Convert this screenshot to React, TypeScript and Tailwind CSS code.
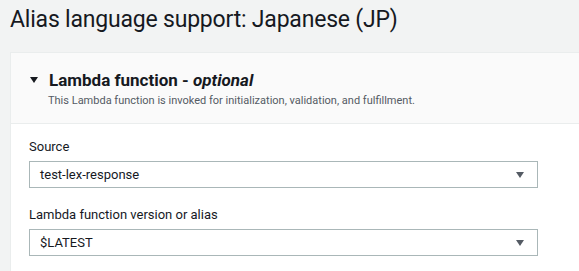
function Caret({ className }: { className?: string }) {
  return (
    <svg width="8" height="6" viewBox="0 0 8 6" className={className}>
      <path d="M0 0h8L4 6z" fill="currentColor" />
    </svg>
  );
}

function SelectField({ label, value }: { label: string; value: string }) {
  return (
    <div className="flex flex-col">
      <label className="text-[13px] leading-[16px] text-[#16191f]">{label}</label>
      <div className="mt-[6px] flex h-[27px] w-[509px] items-center justify-between border border-[#aab7b8] bg-white pl-[10px] pr-[13px]">
        <span className="text-[13px] text-[#16191f]">{value}</span>
        <Caret className="text-[#545b64]" />
      </div>
    </div>
  );
}

export default function App() {
  return (
    <div className="min-h-screen overflow-hidden bg-[#f2f3f3] pl-[10px] font-['Roboto',sans-serif]">
      <h1 className="pt-[5px] text-[23px] leading-[30px] tracking-[-0.2px] text-[#16191f]">
        Alias language support: Japanese (JP)
      </h1>

      <div className="mt-[17px] w-[640px] border border-[#eaeded] bg-white">
        {/* header */}
        <div className="h-[71px] border-b border-[#eaeded] bg-[#fafafa] pl-[19px] pt-[16px]">
          <div className="flex items-center gap-[11px]">
            <Caret className="text-[#16191f]" />
            <h2 className="text-[17px] font-bold leading-[22px] text-[#16191f]">
              Lambda function - <i className="font-bold">optional</i>
            </h2>
          </div>
          <p className="mt-[3px] pl-[18px] text-[11px] leading-[14px] text-[#545b64]">
            This Lambda function is invoked for initialization, validation, and fulfillment.
          </p>
        </div>

        {/* body */}
        <div className="flex flex-col gap-[19px] pl-[18px] pt-[15px] pb-[20px]">
          <SelectField label="Source" value="test-lex-response" />
          <SelectField label="Lambda function version or alias" value="$LATEST" />
        </div>
      </div>
    </div>
  );
}
